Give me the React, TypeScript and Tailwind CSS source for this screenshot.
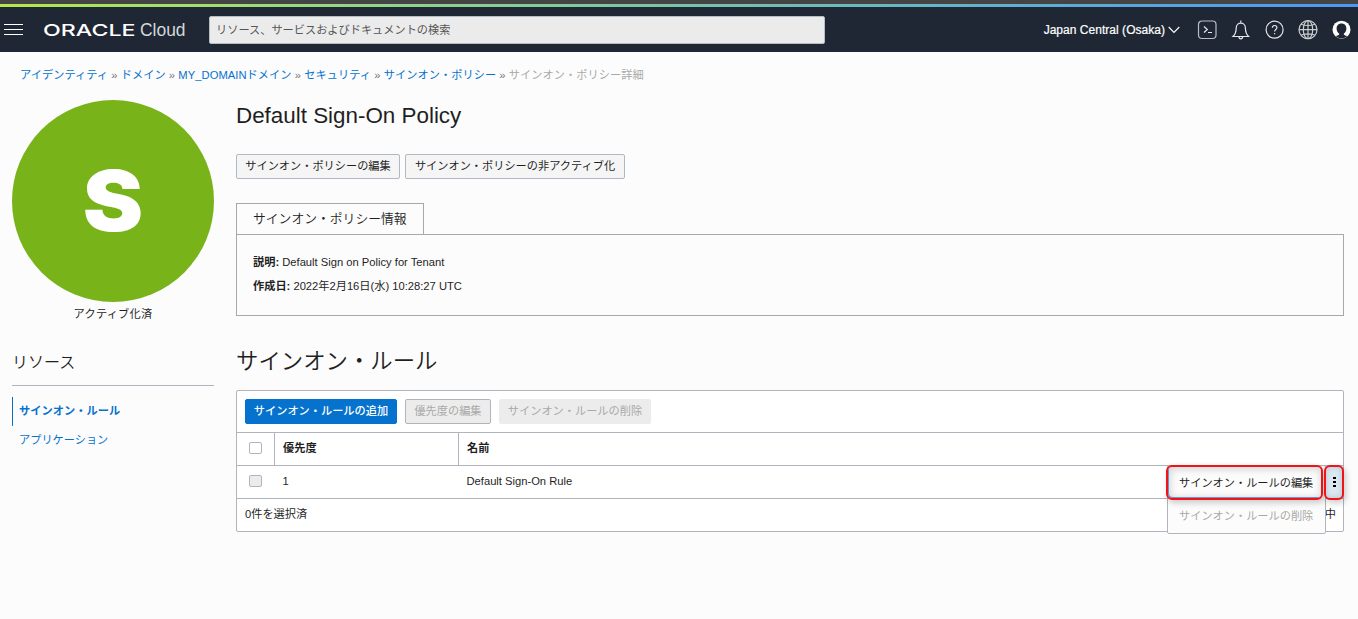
import type { ReactNode } from "react";
import { clsx } from "clsx";

const crumbs = ["アイデンティティ", "ドメイン", "MY_DOMAINドメイン", "セキュリティ", "サインオン・ポリシー"];

function Logo() {
	return (
		<svg width="148" height="28" viewBox="0 -4 148 28" className="ml-5 -mr-1 shrink-0" fill="#fff">
			<text x="0" y="16" fontFamily="Inter, sans-serif" fontSize="16.5" fontWeight="500" textLength="92.500" lengthAdjust="spacingAndGlyphs">
				ORACLE
			</text>
			<text x="97" y="16" fontFamily="'Liberation Sans', sans-serif" fontSize="18.5" fill="#d5d8db" textLength="45.500" lengthAdjust="spacingAndGlyphs">
				Cloud
			</text>
		</svg>
	);
}

function Header() {
	return (
		<header>
			<div className="h-1 bg-[#444444]" />
			<div className="h-[3px] bg-linear-to-r from-[#b2e84c] via-[#79c3a8] to-[#4b97f5]" />
			<div className="h-[45px] bg-[#1e2733] flex items-center text-white">
				<div className="ml-1 w-[19px] h-[11px] flex flex-col justify-between shrink-0">
					<div className="h-px bg-white" />
					<div className="h-px bg-white" />
					<div className="h-px bg-white" />
				</div>
				<Logo />
				<div className="ml-[22px] w-[616px] h-7 shrink-0 rounded-xs border border-[#b4bcc4] bg-[#ebebeb] px-1.5 text-[#555] leading-[26px]">
					リソース、サービスおよびドキュメントの検索
				</div>
				<div className="ml-auto flex items-center">
					<span className="text-xs text-white tracking-[0.03px] [-webkit-text-stroke:0.2px]">Japan Central (Osaka)</span>
					<svg width="12" height="8" viewBox="0 0 12 8" className="ml-[3px]" fill="none" stroke="#fff" strokeWidth="1.1">
						<path d="M.7 1 6 6.5 11.3 1" />
					</svg>
				</div>
				<svg width="160" height="20" viewBox="0 0 160 20" className="ml-[17px] mr-px shrink-0" fill="none" stroke="#e4e7ea" strokeWidth="1.2">
					<rect x="1.500" y="1" width="17.500" height="17.500" rx="3.500" stroke="#b9bec4" />
					<path d="m7 6.500 3.300 3-3.300 3M11 12.500h4" />
					<path d="M36 16.500c2.700-2.500 3.200-5 3.200-8.500 0-6.500 9.200-6.500 9.200 0 0 3.500.5 6 3.200 8.500zM42 16.800a1.800 2 0 0 0 3.600 0M43.800 3V.5" />
					<circle cx="77.600" cy="9.700" r="8.500" />
					<path d="M75.400 7.800c0-3 4.500-3 4.500-.2 0 2-2.300 1.700-2.300 4M77.600 13v1.300" />
					<g stroke="#c9cdd1">
						<circle cx="111" cy="9.700" r="9" />
						<ellipse cx="111" cy="9.700" rx="4.700" ry="9" />
						<path d="M111 .7v18M102 9.700h18M104 4.200q7 2.600 14 0M104 15.200q7-2.600 14 0" />
					</g>
					<g stroke="none">
						<circle cx="144.500" cy="9.700" r="9" fill="#fff" />
						<path d="M144.500 3.500c-3.200 0-4.900 2.200-4.900 5s1.300 3.900 2.400 5.100c.9 1.200-.8 1.500-3.500 2.500a8.600 8.600 0 0 0 12 0c-2.700-1-4.400-1.300-3.500-2.500 1.100-1.200 2.400-2.300 2.400-5.100s-1.700-5-4.900-5" fill="#1e2733" />
					</g>
				</svg>
			</div>
		</header>
	);
}

function Button({ className, children }: { className: string; children: ReactNode }) {
	return (
		<button className={clsx("h-[25px] rounded-xs border leading-[23px] whitespace-nowrap", className)}>
			{children}
		</button>
	);
}

function Sidebar() {
	return (
		<aside className="w-[202px] shrink-0">
			<div className="size-[202px] rounded-full bg-[#79b31a] flex items-center justify-center">
				<span className="font-[Inter] font-black text-[84px] leading-none text-white scale-x-108">S</span>
			</div>
			<div className="mt-0.5 h-5 leading-5 text-center tracking-[0.25px]">アクティブ化済</div>
			<h2 className="mt-5 h-[42px] border-b border-[#b0b5bd] text-base leading-[38px] font-[350]">リソース</h2>
			<nav className="mt-[11px] text-[#0572ce]">
				<div className="h-[29px] border-l border-[#0572ce] pl-1.5 leading-[29px] font-bold tracking-[0.06px]">サインオン・ルール</div>
				<div className="h-[29px] pl-[7px] leading-[29px]">アプリケーション</div>
			</nav>
		</aside>
	);
}

function RulesTable() {
	return (
		<div className="relative h-[142px] rounded-xs border border-[#b0b5bd] bg-white">
			<div className="h-[41px] flex items-center gap-2 px-2">
				<Button className="w-[152px] border-[#0572ce] bg-[#0572ce] text-white font-medium">サインオン・ルールの追加</Button>
				<Button className="w-[86px] border-[#b0b5bd] bg-[#ececec] text-[#a9a9a9]">優先度の編集</Button>
				<Button className="w-[152px] border-[#ececec] bg-[#ececec] text-[#a9a9a9]">サインオン・ルールの削除</Button>
			</div>
			<div className="h-[33px] border-t border-[#b0b5bd] grid grid-cols-[37px_184px_1fr] leading-[31px] font-bold">
				<div className="flex items-center justify-center pb-0.5">
					<div className="w-[13px] h-3 rounded-xs border border-[#b0b5bd]" />
				</div>
				<div className="border-l border-[#b0b5bd] pl-2">優先度</div>
				<div className="border-l border-[#b0b5bd] pl-2">名前</div>
			</div>
			<div className="h-[33px] border-t border-[#b0b5bd] grid grid-cols-[37px_184px_1fr] leading-[31px]">
				<div className="flex items-center justify-center pb-0.5">
					<div className="w-[13px] h-3 rounded-xs border border-[#b0b5bd] bg-[#ececec]" />
				</div>
				<div className="pl-[8.500px]">1</div>
				<div className="pl-[8.500px]">Default Sign-On Rule</div>
			</div>
			<div className="h-[33px] border-t border-[#b0b5bd] flex justify-between pl-2 pr-[7px] leading-[31px]">
				<span>0件を選択済</span>
				<span>中</span>
			</div>

			{/* row actions menu */}
			<div className="absolute left-[930px] top-[74px] w-[159px] h-[69px] rounded-xs border border-[#b0b5bd] bg-[#fcfcfc]">
				<div className="h-[34px] pl-[11px] leading-[35px]">サインオン・ルールの編集</div>
				<div className="h-[33px] pl-[11px] leading-[33px] text-[#a9a9a9]">サインオン・ルールの削除</div>
			</div>
			<div className="absolute left-[929px] top-[74px] w-[157px] h-[35px] rounded-md border-2 border-[#f01418] shadow-[2px_3px_6px_rgba(0,0,0,0.2),inset_1px_-1px_0_#6f95c8,inset_1px_1px_7px_2px_rgba(0,0,0,0.14)]" />
			<div className="absolute left-[1087px] top-[74px] w-5 h-[35px] rounded-md border-2 border-[#f01418] bg-[#dce9f2] shadow-[2px_3px_6px_rgba(0,0,0,0.2),inset_0_0_5px_1px_rgba(60,80,100,0.2)] pb-px flex flex-col items-center justify-center gap-0.5">
				<div className="w-[3px] h-0.5 bg-black" />
				<div className="w-[3px] h-0.5 bg-black" />
				<div className="w-[3px] h-0.5 bg-black" />
			</div>
		</div>
	);
}

export default function App() {
	return (
		<div className="h-[619px] overflow-hidden bg-[#fcfcfc] text-[#1f1f1f] text-[11.2px] font-['Liberation_Sans','Noto_Sans_CJK_JP',sans-serif]">
			<Header />
			<div className="h-12 pl-5 leading-[47px] whitespace-nowrap tracking-[0.06px]">
				{crumbs.map((crumb) => (
					<span key={crumb}>
						<span className="text-[#0572ce]">{crumb}</span>
						<span className="text-[#777]"> » </span>
					</span>
				))}
				<span className="text-[#a9a9a9]">サインオン・ポリシー詳細</span>
			</div>
			<div className="flex pl-3">
				<Sidebar />
				<main className="ml-[22px] w-[1108px]">
					<h1 className="h-[54px] text-[22.4px] leading-8">Default Sign-On Policy</h1>
					<div className="flex gap-[5px]">
						<Button className="w-[164px] border-[#b0b8c2] bg-[#f5f5f5]">サインオン・ポリシーの編集</Button>
						<Button className="w-[220px] border-[#b0b8c2] bg-[#f5f5f5]">サインオン・ポリシーの非アクティブ化</Button>
					</div>
					<div className="mt-6 w-[188px] h-8 border border-b-0 border-[#a8a8a8] pl-4 text-[12.8px] leading-[29px] font-[350]">
						サインオン・ポリシー情報
					</div>
					<div className="-mt-px h-[82px] border border-[#a8a8a8] px-4 pt-[15px] leading-6">
						<p>
							<b>説明:</b> <span>Default Sign on Policy for Tenant</span>
						</p>
						<p>
							<b>作成日:</b> 2022年2月16日(水) 10:28:27 UTC
						</p>
					</div>
					<h2 className="mt-6 h-[50px] text-[22.4px] leading-[44px] font-[350]">サインオン・ルール</h2>
					<RulesTable />
				</main>
			</div>
		</div>
	);
}
